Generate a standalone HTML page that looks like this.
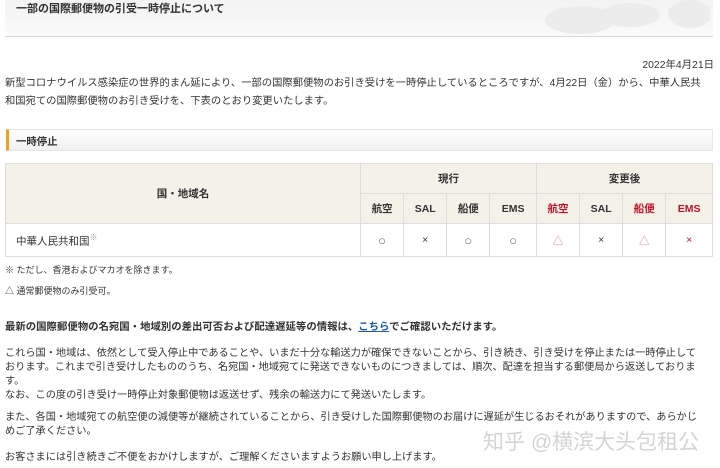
<!DOCTYPE html>
<html><head><meta charset="utf-8"><style>
body{margin:0;width:720px;height:468px;overflow:hidden;background:#fff;font-family:"Liberation Sans","Noto Sans CJK JP",sans-serif;color:#333;font-size:10.4px;position:relative}
.a{position:absolute;white-space:nowrap}
.hdr{position:absolute;left:5px;top:0;width:708px;height:36px;background:linear-gradient(#f3f3f3,#fafafa);border-bottom:1px solid #d8d8d8}
.sec{position:absolute;left:6px;top:129px;width:707px;height:22px;background:linear-gradient(#fff,#f0f0f0);border:1px solid #e6e6e6;border-left:3px solid #f0a020;box-sizing:border-box}
table{position:absolute;left:5px;top:163px;border-collapse:collapse;width:708px;font-size:10.5px}
td{border:1px solid #ddd;text-align:center;padding:0}
.h{background:#f3f1e8;font-weight:bold}
.r{color:#c0102a}
.s{font-size:13px;color:#666}
</style></head><body>
<div class="hdr"></div>
<svg class="a" style="left:520px;top:0" width="190" height="36"><g fill="#ececec"><ellipse cx="60" cy="20" rx="35" ry="14"/><ellipse cx="110" cy="15" rx="30" ry="12"/><ellipse cx="170" cy="14" rx="22" ry="14"/></g></svg>
<div class="a" style="left:16px;top:0px;font-weight:bold;font-size:11px">一部の国際郵便物の引受一時停止について</div>
<div class="a" style="right:6px;top:56px">2022年4月21日</div>
<div class="a" style="left:5px;top:75px;line-height:18px;font-size:10.3px">新型コロナウイルス感染症の世界的まん延により、一部の国際郵便物のお引き受けを一時停止しているところですが、4月22日（金）から、中華人民共<br>和国宛ての国際郵便物のお引き受けを、下表のとおり変更いたします。</div>
<div class="sec"></div>
<div class="a" style="left:16px;top:133px;font-weight:bold">一時停止</div>
<table>
<tr style="height:30px"><td class="h" rowspan="2" style="width:354px">国・地域名</td><td class="h" colspan="4">現行</td><td class="h" colspan="4">変更後</td></tr>
<tr style="height:30px" class="h"><td class="h">航空</td><td class="h">SAL</td><td class="h">船便</td><td class="h">EMS</td><td class="h r">航空</td><td class="h">SAL</td><td class="h r">船便</td><td class="h r">EMS</td></tr>
<tr style="height:33px"><td style="text-align:left;padding-left:10px">中華人民共和国<sup style="color:#999;font-size:8px">※</sup></td><td class="s">○</td><td>×</td><td class="s">○</td><td class="s">○</td><td style="color:#d77">△</td><td>×</td><td style="color:#d77">△</td><td class="r">×</td></tr>
</table>
<div class="a" style="left:5px;top:263px;font-size:9px">※ ただし、香港およびマカオを除きます。</div>
<div class="a" style="left:5px;top:284px;font-size:9px">△ 通常郵便物のみ引受可。</div>
<div class="a" style="left:5px;top:318px;font-weight:bold">最新の国際郵便物の名宛国・地域別の差出可否および配達遅延等の情報は、<span style="color:#1a5aa8;text-decoration:underline">こちら</span>でご確認いただけます。</div>
<div class="a" style="left:5px;top:347px;line-height:14px;font-size:10.2px">これら国・地域は、依然として受入停止中であることや、いまだ十分な輸送力が確保できないことから、引き続き、引き受けを停止または一時停止して<br>おります。これまで引き受けしたもののうち、名宛国・地域宛てに発送できないものにつきましては、順次、配達を担当する郵便局から返送しておりま<br>す。<br>なお、この度の引き受け一時停止対象郵便物は返送せず、残余の輸送力にて発送いたします。</div>
<div class="a" style="left:5px;top:411px;line-height:14px;font-size:10.2px">また、各国・地域宛ての航空便の減便等が継続されていることから、引き受けした国際郵便物のお届けに遅延が生じるおそれがありますので、あらかじ<br>めご了承ください。</div>
<div class="a" style="left:5px;top:448px;font-size:10.2px">お客さまには引き続きご不便をおかけしますが、ご理解くださいますようお願い申し上げます。</div>
<div class="a" style="left:483px;top:426px;font-size:21px;color:rgba(205,205,205,0.85)">知乎 @横滨大头包租公</div>
</body></html>
